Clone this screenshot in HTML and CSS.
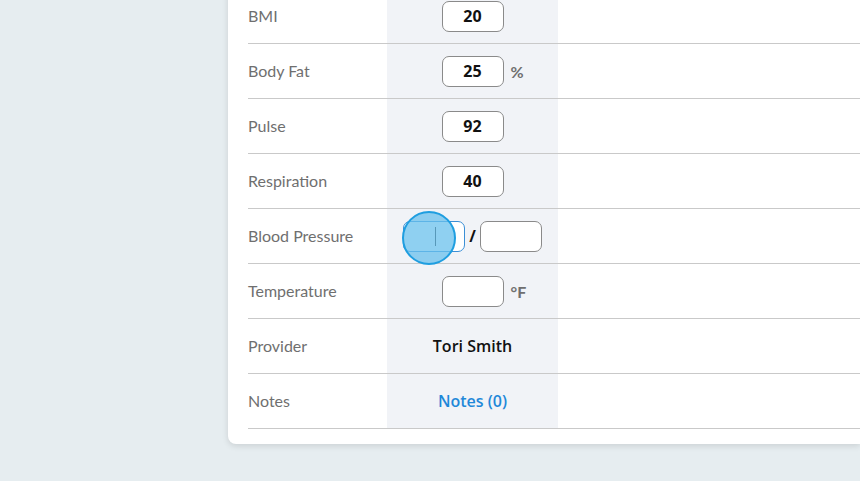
FILE: index.html
```html
<!DOCTYPE html>
<html>
<head>
<meta charset="utf-8">
<link rel="stylesheet" href="styles.css">
</head>
<body>
<div class="page">
  <div class="card">
    <div class="row">
      <div class="label">BMI</div>
      <div class="value"><span></span><div class="field">20</div><span class="unit"></span></div>
    </div>
    <div class="row">
      <div class="label">Body Fat</div>
      <div class="value"><span></span><div class="field">25</div><span class="unit">%</span></div>
    </div>
    <div class="row">
      <div class="label">Pulse</div>
      <div class="value"><span></span><div class="field">92</div><span class="unit"></span></div>
    </div>
    <div class="row">
      <div class="label">Respiration</div>
      <div class="value"><span></span><div class="field">40</div><span class="unit"></span></div>
    </div>
    <div class="row">
      <div class="label">Blood Pressure</div>
      <div class="value">
        <span></span>
        <div class="bp">
          <div class="field focused"><span class="caret"></span><span class="touch"></span></div>
          <span class="slash">/</span>
          <div class="field"></div>
        </div>
        <span class="unit"></span>
      </div>
    </div>
    <div class="row">
      <div class="label">Temperature</div>
      <div class="value"><span></span><div class="field"></div><span class="unit">°F</span></div>
    </div>
    <div class="row">
      <div class="label">Provider</div>
      <div class="value"><span></span><div class="text">Tori Smith</div><span class="unit"></span></div>
    </div>
    <div class="row">
      <div class="label">Notes</div>
      <div class="value"><span></span><div class="text link">Notes (0)</div><span class="unit"></span></div>
    </div>
  </div>
</div>
</body>
</html>
```

FILE: styles.css
```css
html, body {
  margin: 0;
  padding: 0;
  height: 100%;
  overflow: hidden;
  background: #e6edf0;
  font-family: Lato, "Noto Sans", sans-serif;
}

.page {
  padding-left: 228px;
}

.card {
  margin-top: -11px;
  background: #ffffff;
  border-radius: 0 0 0 8px;
  box-shadow: 0 2px 6px rgba(0, 0, 0, 0.12);
  padding: 0 0 15px 20px;
}

.row {
  display: flex;
  height: 54px;
  border-bottom: 1px solid #c9c9c9;
}

.label {
  width: 139px;
  display: flex;
  align-items: center;
  padding-bottom: 2px;
  font-size: 16px;
  color: #6f6f6f;
}

.value {
  width: 171px;
  background: #f1f3f7;
  display: grid;
  grid-template-columns: 1fr auto 1fr;
  align-items: center;
}

.field {
  position: relative;
  box-sizing: border-box;
  width: 62px;
  height: 31px;
  border: 1px solid #8a8a8a;
  border-radius: 7px;
  background: #ffffff;
  display: flex;
  align-items: center;
  justify-content: center;
  font-family: "Open Sans", sans-serif;
  font-size: 16px;
  font-weight: 700;
  color: #111111;
}

.field.focused {
  border-color: #3b8fd6;
}

.caret {
  width: 1px;
  height: 19px;
  background: #222222;
  margin-left: 2px;
}

.touch {
  position: absolute;
  left: -2px;
  top: -11px;
  width: 50px;
  height: 50px;
  border-radius: 50%;
  background: rgba(105, 192, 236, 0.75);
  border: 2px solid #1f9ee0;
}

.unit {
  padding-left: 7px;
  font-size: 16px;
  font-weight: 700;
  color: #6f6f6f;
}

.bp {
  display: flex;
  align-items: center;
  gap: 4px;
}

.slash {
  font-family: "Open Sans", sans-serif;
  font-size: 16px;
  font-weight: 700;
  color: #111111;
}

.text {
  font-family: "Open Sans", sans-serif;
  font-size: 16px;
  font-weight: 600;
  color: #111111;
}

.text.link {
  color: #1f88d9;
}
```
